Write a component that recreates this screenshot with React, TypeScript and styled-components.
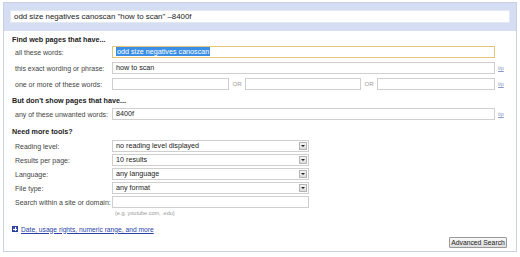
import React from 'react'
import styled, { createGlobalStyle } from 'styled-components'

const GlobalStyle = createGlobalStyle`
  body {
    margin: 0;
    background: #ffffff;
    font-family: "Liberation Sans", Arial, sans-serif;
  }
`

const Frame = styled.div`
  margin: 2px 0 0 3px;
  width: 512px;
  height: 248px;
  border: 1px solid #c9d0e0;
  display: flex;
  flex-direction: column;
`

const TopBand = styled.div`
  height: 28px;
  background: #d5ddf2;
  padding: 7px 0 0 6px;
  box-sizing: border-box;
`

const QueryBox = styled.div`
  width: 500px;
  height: 13px;
  box-sizing: border-box;
  background: #fff;
  border: 1px solid #e3e8f3;
  font-size: 7.9px;
  line-height: 11px;
  padding-left: 3px;
  color: #222;
`

const Body = styled.div`
  padding: 0 0 0 8px;
  display: flex;
  flex-direction: column;
  flex: 1;
`

const Heading = styled.div<{ $top: number }>`
  margin-top: ${({ $top }) => $top}px;
  height: 12px;
  line-height: 12px;
  font-size: 7.2px;
  font-weight: bold;
  color: #222;
`

const Rows = styled.div<{ $gap: number; $top?: number }>`
  display: flex;
  flex-direction: column;
  gap: ${({ $gap }) => $gap}px;
  margin-top: ${({ $top }) => $top || 0}px;
`

const Row = styled.div`
  display: flex;
  align-items: center;
  height: 12px;
`

const Label = styled.div`
  width: 100px;
  flex-shrink: 0;
  padding-left: 3px;
  box-sizing: border-box;
  font-size: 7px;
  color: #444;
  white-space: nowrap;
`

const Field = styled.div<{ $w: number; $focus?: boolean }>`
  width: ${({ $w }) => $w}px;
  height: 12px;
  box-sizing: border-box;
  border: 1px solid ${({ $focus }) => ($focus ? '#e2c47c' : '#cfcfcf')};
  background: #fff;
  font-size: 7.2px;
  line-height: 10px;
  padding-left: 3px;
  color: #222;
  white-space: nowrap;
  position: relative;
`

const Selected = styled.span`
  background: #3a8ee6;
  color: #fff;
  padding: 0 1px;
`

const Or = styled.span`
  width: 16px;
  text-align: center;
  font-size: 6px;
  color: #999;
`

const Tip = styled.a`
  margin-left: 3px;
  font-size: 5.5px;
  color: #8d9ac8;
  text-decoration: underline;
`

const Arrow = styled.span`
  position: absolute;
  right: 1px;
  top: 1px;
  width: 8px;
  height: 8px;
  box-sizing: border-box;
  border: 1px solid #b5b5b5;
  background: linear-gradient(#f4f4f4, #dcdcdc);
  display: flex;
  align-items: center;
  justify-content: center;
  &::after {
    content: '';
    border-left: 2px solid transparent;
    border-right: 2px solid transparent;
    border-top: 2px solid #222;
  }
`

const Hint = styled.div`
  margin: 1px 0 0 103px;
  height: 8px;
  line-height: 8px;
  font-size: 5.5px;
  color: #999;
`

const MoreLink = styled.div`
  margin-top: 6px;
  display: flex;
  align-items: center;
  gap: 3px;
  height: 12px;
  font-size: 6.7px;
  color: #2a3fa8;
  text-decoration: underline;
`

const PlusBox = styled.span`
  width: 6px;
  height: 6px;
  box-sizing: border-box;
  background: #3b55b8;
  border: 1px solid #2a3f9a;
  position: relative;
  &::before,
  &::after {
    content: '';
    position: absolute;
    background: #fff;
  }
  &::before {
    left: 0;
    right: 0;
    top: 1.5px;
    height: 1px;
  }
  &::after {
    top: 0;
    bottom: 0;
    left: 1.5px;
    width: 1px;
  }
`

const Footer = styled.div`
  display: flex;
  justify-content: flex-end;
  padding-right: 9px;
  margin-top: 2px;
`

const Button = styled.button`
  width: 58px;
  height: 11px;
  padding: 0;
  font-family: inherit;
  font-size: 6.8px;
  color: #222;
  background: linear-gradient(#f8f8f8, #dedede);
  border: 1px solid #999;
  border-radius: 1px;
`

const Select = ({ value }: { value: string }) => (
  <Field $w={197}>
    {value}
    <Arrow />
  </Field>
)

export default function App() {
  return (
    <>
      <GlobalStyle />
      <Frame>
        <TopBand>
          <QueryBox>odd size negatives canoscan "how to scan" –8400f</QueryBox>
        </TopBand>
        <Body>
          <Heading $top={3}>Find web pages that have...</Heading>
          <Rows $gap={4}>
            <Row>
              <Label>all these words:</Label>
              <Field $w={383} $focus>
                <Selected>odd size negatives canoscan</Selected>
              </Field>
            </Row>
            <Row>
              <Label>this exact wording or phrase:</Label>
              <Field $w={383}>how to scan</Field>
              <Tip>tip</Tip>
            </Row>
            <Row>
              <Label>one or more of these words:</Label>
              <Field $w={117} />
              <Or>OR</Or>
              <Field $w={116} />
              <Or>OR</Or>
              <Field $w={118} />
              <Tip>tip</Tip>
            </Row>
          </Rows>
          <Heading $top={5}>But don't show pages that have...</Heading>
          <Rows $gap={0} $top={1}>
            <Row>
              <Label>any of these unwanted words:</Label>
              <Field $w={383}>8400f</Field>
              <Tip>tip</Tip>
            </Row>
          </Rows>
          <Heading $top={6}>Need more tools?</Heading>
          <Rows $gap={2} $top={2}>
            <Row>
              <Label>Reading level:</Label>
              <Select value="no reading level displayed" />
            </Row>
            <Row>
              <Label>Results per page:</Label>
              <Select value="10 results" />
            </Row>
            <Row>
              <Label>Language:</Label>
              <Select value="any language" />
            </Row>
            <Row>
              <Label>File type:</Label>
              <Select value="any format" />
            </Row>
            <Row>
              <Label>Search within a site or domain:</Label>
              <Field $w={197} />
            </Row>
          </Rows>
          <Hint>(e.g. youtube.com, .edu)</Hint>
          <MoreLink>
            <PlusBox />
            Date, usage rights, numeric range, and more
          </MoreLink>
          <Footer>
            <Button>Advanced Search</Button>
          </Footer>
        </Body>
      </Frame>
    </>
  )
}
